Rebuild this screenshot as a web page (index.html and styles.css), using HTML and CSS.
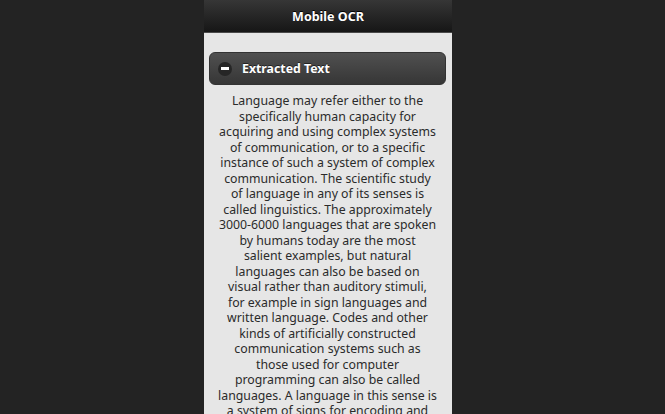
FILE: index.html
```html
<!DOCTYPE html>
<html>
<head>
<meta charset="utf-8">
<title>Mobile OCR</title>
<link rel="stylesheet" href="styles.css">
</head>
<body>
<div class="stage">
  <div class="phone">
    <header class="bar">
      <h1 class="bar-title">Mobile OCR</h1>
    </header>
    <main class="content">
      <section class="collapsible">
        <h2 class="coll-head">
          <span class="coll-icon"><span class="coll-minus"></span></span>
          <span class="coll-title">Extracted Text</span>
        </h2>
        <p class="coll-body">Language may refer either to the<br>
specifically human capacity for<br>
acquiring and using complex systems<br>
of communication, or to a specific<br>
instance of such a system of complex<br>
communication. The scientific study<br>
of language in any of its senses is<br>
called linguistics. The approximately<br>
3000-6000 languages that are spoken<br>
by humans today are the most<br>
salient examples, but natural<br>
languages can also be based on<br>
visual rather than auditory stimuli,<br>
for example in sign languages and<br>
written language. Codes and other<br>
kinds of artificially constructed<br>
communication systems such as<br>
those used for computer<br>
programming can also be called<br>
languages. A language in this sense is<br>
a system of signs for encoding and<br>
decoding information.</p>
      </section>
    </main>
  </div>
</div>
</body>
</html>
```
FILE: styles.css
```css
html, body {
  margin: 0;
  padding: 0;
  height: 100%;
  background: #232323;
  overflow: hidden;
}
.stage {
  width: 656px;
  height: 100%;
  display: flex;
  justify-content: center;
}
.phone {
  width: 248px;
  height: 100%;
  background: #e6e6e6;
  font-family: "Noto Sans", "Open Sans", sans-serif;
  overflow: hidden;
}
.bar {
  height: 32px;
  background: linear-gradient(#363636, #161616);
  border-bottom: 1px solid #4a4a4a;
  display: flex;
  align-items: center;
  justify-content: center;
}
.bar-title {
  margin: 0;
  color: #fff;
  font-size: 12.5px;
  font-weight: bold;
  text-shadow: 0 -1px 0 #000;
}
.content {
  padding: 19px 6px 0 5px;
}
.coll-head {
  margin: 0;
  height: 33px;
  box-sizing: border-box;
  border: 1px solid #333;
  border-radius: 6px;
  background: linear-gradient(#505050, #363636);
  display: flex;
  align-items: center;
  gap: 10px;
  padding-left: 8px;
}
.coll-icon {
  width: 14px;
  height: 14px;
  border-radius: 50%;
  background: #262626;
  display: flex;
  align-items: center;
  justify-content: center;
}
.coll-minus {
  width: 8px;
  height: 3px;
  background: #fff;
}
.coll-title {
  color: #fff;
  font-size: 12.3px;
  font-weight: bold;
  text-shadow: 0 -1px 0 #222;
}
.coll-body {
  margin: 0;
  padding: 8px 0 0 0;
  text-align: center;
  white-space: nowrap;
  color: #2b2b2b;
  font-size: 12.3px;
  line-height: 15.5px;
}
```
